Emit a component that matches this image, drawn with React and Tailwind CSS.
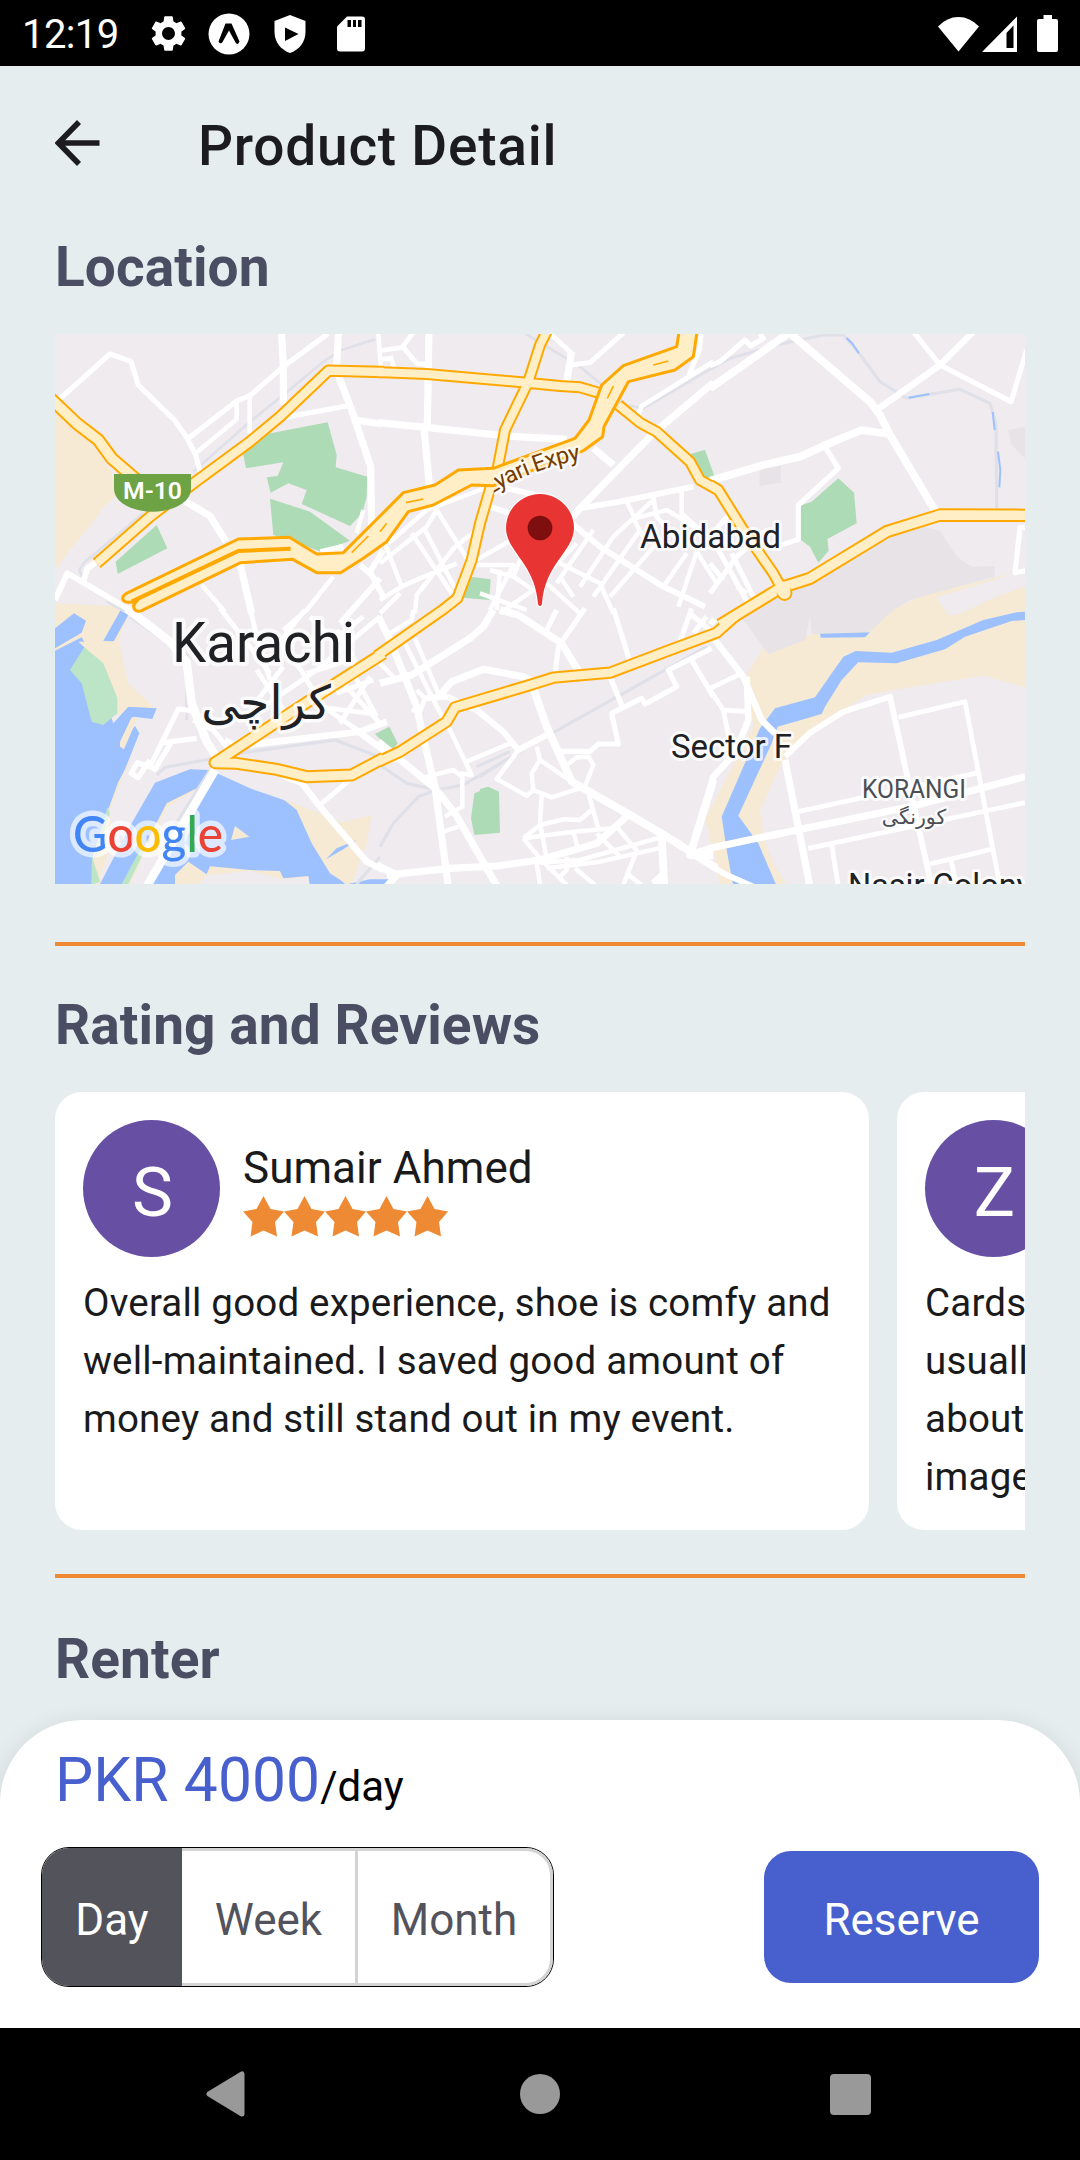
import React from "react";
import { MdSettings } from "react-icons/md";

/* Map geometry: six 330x280 tiles, drawn at 3 units per pixel. */
const TILES = {
  a: "translate(-5 -4) scale(.333333)",
  b: "translate(325 -4) scale(.333333)",
  c: "translate(655 -4) scale(.333333)",
  d: "translate(-5 276) scale(.333333)",
  e: "translate(325 276) scale(.333333)",
  f: "translate(655 276) scale(.333333)",
};

const SAND = "#f6ead5";
const WATER = "#9dc1ff";
const PARK = "#addbb6";
const LAND = "#efebef";
const GREY = "#e7e3e7";

const AREAS = [
  ["a", SAND, "M0 225 L15 240 L145 365 L185 430 L200 500 L160 530 L130 575 L60 660 L15 720 H0Z"],
  ["c", GREY, "M148 418 L212 408 V458 L148 468Z M895 300 L945 290 V385 L905 345Z"],
  ["f", SAND, "M285 80 L560 -5 L640 -45 L860 -98 L945 -118 V232 L820 197 L600 232 L470 255 L400 300 L300 375 L220 450 L205 480 L150 600 L160 680 L190 760 L240 840 L30 840 L15 740 L0 690 V600 L130 350 L112 190 L160 115Z"],
  ["e", SAND, "M1000 590 L975 625 L985 660 L1010 640Z"],
  ["c", GREY, "M90 850 L320 750 L530 620 L640 590 L690 602 L740 680 L785 710 L855 708 L853 740 L600 810 L550 840 L480 905 L305 912 L300 860 L285 930 L175 972 L100 870Z"],
  ["c", LAND, "M678 802 L860 748 L950 715 V768 L860 800 L740 855 L715 855Z"],
  ["f", WATER, "M945 5 L920 7 L820 30 L680 90 L545 128 L437 123 L400 140 L315 262 L195 295 L150 355 L35 620 L50 720 L72 840 H205 L145 700 L85 617 L185 400 L203 350 L335 312 L345 290 L395 210 L445 157 L560 160 L705 118 L765 80 L905 33 L945 30Z M330 71 L480 67 L465 82 L332 83Z"],
  ["a", PARK, "M578 365 L590 350 L650 312 L833 277 L860 375 L857 412 L952 440 L950 500 L937 550 L900 588 L755 522 L770 480 L715 460 L662 488 L650 442 L683 438 L700 397 L588 415Z M660 506 L780 545 L900 632 L812 665 L720 630 L670 615Z M320 585 L352 655 L203 732 L197 695Z"],
  ["b", PARK, "M930 372 L975 360 L1005 443 L960 448Z M270 740 L332 748 L328 810 L250 803Z"],
  ["c", PARK, "M385 445 L432 488 L440 580 L352 627 L356 662 L325 698 L300 650 L270 628 V527 L305 515Z"],
  ["e", PARK, "M-15 372 L28 350 L53 400 L40 418 L0 388Z M283 550 L300 543 L300 537 L325 530 L357 545 L360 668 L283 675 L273 625Z"],
  ["d", SAND, "M15 -20 L245 -10 L205 92 L235 220 L320 300 L235 330 L15 200Z"],
  ["d", WATER, "M15 55 L72 10 L108 32 L95 68 L15 115Z M160 92 L212 0 L235 15 L190 96Z M15 122 L95 82 L105 100 L190 340 L235 290 L320 295 L307 327 L250 320 L215 400 L255 347 L268 370 L240 440 L200 540 L170 610 L130 740 L128 840 H0 V122Z"],
  ["d", SAND, "M85 95 L195 94 L235 220 L283 287 L235 290 L202 310 L190 250 L103 112Z M245 322 L262 325 L222 418 L210 410 V395Z M246 440 L205 515 L160 640 L128 740 V822 H160 L250 640 L200 590Z"],
  ["d", "#bce4c7", "M103 112 L160 160 L202 265 V310 L160 345 L125 335 L95 220 L60 180Z M172 590 L180 610 L128 760 L160 640Z M126 740 L150 815 L132 822 H124Z"],
  ["d", LAND, "M246 440 L212 515 L180 600 L186 700 L150 800 L160 822 L260 640 L330 500 L420 470 L300 380Z"],
  ["d", WATER, "M150 822 L245 640 L315 518 L420 478 L480 480 L600 535 L730 580 L800 700 L845 785 L905 840 H140Z"],
  ["d", SAND, "M350 580 L440 535 L255 822 H225Z M375 795 L415 755 L470 793 L480 769 L600 780 L690 783 L700 805 L775 798 L780 830 H375Z M555 648 L598 680 L543 690Z M700 568 L880 637 L965 615 L960 700 L920 822 H890 L840 790 L785 700 L740 600Z"],
  ["d", "#bce4c7", "M285 720 L235 822 H215 L270 720Z"],
  ["d", LAND, "M478 480 L440 540 L352 590 L290 720 L240 822 H300 L400 660 L500 490Z M470 796 L600 782 L695 808 L775 802 L778 830 H440Z M965 615 L990 600 V810 L905 822 L950 700Z"],
  ["d", WATER, "M828 748 L860 715 L920 690 L880 718Z M895 822 L960 808 L1020 808 L1010 822Z"],
];

/* Railways and drains. */
const RAILS = [
  ["a", 8, "M975 28 L875 60 L820 95 L700 195 L600 275 L430 425 M280 550 L100 700 L88 720 L100 750 M170 815 L235 850"],
  ["b", 8, "M435 10 L600 110 L740 225 L790 235 L990 118"],
  ["c", 9, "M0 118 L60 85 L200 45 L340 15 L400 15 L440 60 L510 155 L590 205 L750 178 L840 220 L858 280 L860 535"],
  ["d", 9, "M410 130 V330 M320 495 L345 472 L600 425 L855 390 L1000 445 M480 480 L340 700 M240 20 L400 130 M920 822 L990 740"],
  ["e", 9, "M0 465 L80 520 L170 540 L250 525 L480 390 L980 110 M0 710 L40 640 L115 560 L170 540 M290 470 L390 425 M300 500 L410 430"],
];

const CANALS = [
  ["c", 6, "M410 24 L428 42 L446 70 M596 203 L658 192 M848 246 L854 300 M864 365 L871 420 L868 472"],
];

/* White streets. */
const STREETS = [
  ["a", 14, "M20 215 L180 72 L243 94 L265 165 L375 272 L412 325 L437 375 L450 425 M415 325 L560 213 L600 197 L700 110 L835 10 M690 265 L890 228"],
  ["a", 12, "M437 370 L560 268 V215 M599 200 V310 M455 765 L525 845 M850 740 L770 840 L700 900 M940 540 L920 610 M985 10 L992 110"],
  ["a", 20, "M694 0 L700 110 V225 M866 0 L860 105 L870 150 L905 240 L962 410 L965 600 M400 510 L480 558 L528 635 M570 700 L605 850 M915 270 L995 282 M812 668 L880 652"],
  ["a", 16, "M15 810 L52 730 L240 840 M100 755 L112 715 L150 688 M990 745 L870 880 M930 705 L965 735 L1000 800 M960 725 L1000 660"],
  ["b", 20, "M147 0 L142 280 L132 295 L148 465 M-5 278 L145 293 L380 318 L560 328"],
  ["b", 13, "M0 62 L70 52 L110 100 L150 105 M0 88 L40 84 M30 78 L45 118 M68 50 L105 0 M510 10 L575 70 L570 105 L630 98 L740 0 M965 0 L958 60 L925 140 M775 255 L785 228 L1000 95"],
  ["b", 20, "M575 65 L560 155 M1000 158 L820 310 L600 535 L560 580 M640 355 L700 405"],
  ["b", 16, "M600 535 L720 515 L940 470 M570 575 L660 650 L850 770 L975 830 M330 530 L390 550 M360 470 L470 495"],
  ["b", 12, "M25 640 L140 540 L300 480 L360 470 M0 700 L140 590 L170 540 L270 700 M130 590 L225 775 M95 610 L215 790 M15 640 L65 770 L0 810 M65 770 L120 745 L230 700 M105 850 L110 795 L225 650 L310 585 M0 850 L60 790 M280 695 L430 610 M290 705 H400 L330 840 M330 720 L400 740 L460 780 L360 850 M400 740 L440 640 M360 720 L350 840 M300 790 L440 840"],
  ["b", 12, "M590 640 L470 760 M540 700 L660 760 L700 850 M600 770 L700 620 L820 510 M640 800 L780 600 M530 760 L640 600 M690 800 L830 640 M540 740 L580 800 M820 500 L830 560 L900 640 M905 480 V550 L960 600 M740 515 L765 565 L860 540 L960 600 M760 565 L800 640 M950 665 L1010 760 M950 665 L895 830 M850 770 L920 670 M500 760 L600 850"],
  ["c", 22, "M240 10 L480 215 L510 255 L540 315 L680 550 M0 175 L235 10 M0 452 L160 405 L270 380 L370 335 L455 300 L535 312"],
  ["c", 18, "M500 240 L690 105 L790 5"],
  ["c", 14, "M610 5 L690 105 L903 215 L950 60 M0 108 L30 95 L105 30 L122 48 L160 25 L150 10 M345 350 L385 415 L265 525 V628 L200 650 M950 592 H930 L915 728 L950 722"],
  ["c", 14, "M0 700 L40 750 M20 650 L120 830 M65 670 L130 800 M0 790 L80 680 L170 600 M80 770 L110 790 M0 620 L60 550"],
  ["d", 24, "M230 -5 L360 95 L410 155 L425 280 L470 395 L505 450 M495 480 L290 830"],
  ["d", 14, "M425 302 L385 297 L300 470 L262 458 L243 490 L265 503 L300 450 M340 398 L440 385 M362 400 L315 478 L290 465 M525 390 L550 400 M430 330 L490 360 L545 430"],
  ["d", 18, "M590 405 L930 365 L1010 335 M700 498 L755 518 L810 590 L950 755 L1000 780 M925 365 L1040 450"],
  ["d", 13, "M815 580 L905 505 M510 -5 L600 110 L660 190 M600 -5 L630 120 L660 210 M765 0 L690 95 L760 190 M990 20 L800 180 L640 290 M620 180 L700 300 M700 170 L600 300 M750 175 L800 260 M780 20 L850 90 L940 20 M880 220 L990 340 M800 290 L960 310 M770 190 L900 150 M860 60 L920 160 M860 250 L970 210 M870 340 L960 200 M910 190 L980 320 M820 290 L930 365"],
  ["e", 20, "M-5 20 L30 90 L110 290 L128 375 L165 530 L205 830 M-5 395 L165 535 L225 610 L352 830 M20 795 L210 775 L350 768 L480 750 L650 700 L740 620"],
  ["e", 20, "M0 220 L95 195 L270 85 L310 50 L340 0 M180 255 L215 215 L310 178 L430 200 L470 220 M360 0 L415 15 L545 100 L600 190 M-10 765 L50 795 L20 830"],
  ["e", 12, "M75 100 L150 250 L200 345 M105 85 L175 250 M0 160 L40 200 M100 0 L95 30 L30 70 M205 350 L275 495 L240 490 M260 455 L390 400 M120 505 L220 480 L247 500 V590 L195 620 M190 665 L235 650 M95 300 L120 305 L135 265 L110 240"],
  ["e", 17, "M130 265 L200 260 L290 300 L370 365 L415 420 L500 375"],
  ["e", 14, "M530 0 L495 70 M615 -5 L535 110 L525 195 M700 -5 L750 155 M690 200 L727 290 M995 115 L865 180 L890 230 L795 282 L785 265 L695 310 L715 402 H655 L630 424 H540 M932 145 L1000 260 M935 -5 L900 95 M930 10 L1000 70 M940 70 L980 20"],
  ["e", 22, "M460 235 L500 350 L575 515 L750 615 L860 680 L1010 775"],
  ["e", 12, "M480 450 L575 515 M415 420 L350 507 L440 557 L460 540 L455 490 L480 450 L470 410 M460 540 L515 562 L615 530 L640 465 L625 440 L590 442 L555 470 M485 555 L480 640 L500 745 M625 550 L655 655 M430 685 L480 645 L550 628 L600 630 L635 600 M430 685 L580 665 L700 655 M430 685 L480 745 L560 825 M580 665 L592 710 M480 758 L600 750 L850 680 M500 775 L660 755 L850 712 M650 670 L720 740 M710 650 L770 722 L730 825 M560 740 V780 L535 805 M585 775 L645 825 M470 760 L480 825 M740 790 L785 825"],
  ["e", 22, "M845 680 L853 830 M1000 510 L930 735 H1000 M820 822 L855 790"],
  ["f", 18, "M15 90 L100 200 L155 330 L195 370 M110 200 L115 330 L75 430 L10 500 L-10 570 M0 30 L15 40"],
  ["f", 13, "M0 235 L95 190 M0 240 L40 300 L60 400 M40 300 L115 305 M565 322 L765 275 L870 830 M265 605 L540 545 L810 487 M295 715 L945 578 M365 705 L385 830 M660 762 L855 715 M722 745 L740 830"],
  ["f", 20, "M225 450 L300 830 M-60 735 L0 715 L140 685 L600 590 L830 530 L945 500"],
  ["f", 16, "M225 440 L300 368 L400 305 L540 260 L605 560 L665 830 M-40 740 L40 790 L130 830"],
];

/* Yellow main roads. */
const MAIN = [
  ["a", 36, "M0 205 L15 218 L80 280 L145 330 L185 385 L260 450"],
  ["a", 32, "M140 700 L300 560 L430 460 L600 335 L690 260 L835 122 L1000 126"],
  ["b", 31, "M-10 126 L140 132 L440 158 L540 168 L600 172 L655 188 M500 5 L480 45 L445 155 L375 300 L350 430 M335 460 L300 580 L275 690 L232 805 L190 838 L-10 978 M715 225 L780 278 L830 305 L930 395 L960 450 L1010 478"],
  ["c", 31, "M0 465 L25 480 L100 600 L190 730 L215 775"],
  ["c", 35, "M30 885 L215 772 L300 745 L530 605 L690 555 L960 556"],
  ["d", 34, "M1000 130 L840 232 L720 310 L495 458 L560 460 L680 478 L770 500 L905 495 L1000 445"],
  ["e", 32, "M-5 455 L60 425 L200 335 L225 292 L440 228 L520 203 L690 188 L870 120 L1010 68 L1070 15"],
];

const HIGHWAY =
  "M240 785 L565 627 L718 622 L800 672 L880 668 L990 558 L1060 488 L1155 465 L1225 420 L1330 415 L1575 325 L1617 270 L1655 165 L1720 107 L1880 50 L1888 0 L1942 0 L1930 80 L1875 120 L1735 155 L1662 290 L1658 320 L1600 362 L1330 467 L1265 465 L1150 525 L1075 545 L1010 635 L940 685 L872 728 L800 728 L728 688 L572 698 L275 842 C255 850 240 828 262 812 L250 815 C215 822 205 800 240 785Z";

function Strokes({ items, color, extra = 0 }) {
  return items.map(([tile, width, d], i) => (
    <path key={i} transform={TILES[tile]} d={d} stroke={color} strokeWidth={width + extra} fill="none" strokeLinejoin="round" />
  ));
}

function Label({ children, color = "#202124", halo = 6, ...props }) {
  return (
    <text fill={color} stroke="#fff" strokeOpacity=".75" strokeWidth={halo} strokeLinejoin="round" paintOrder="stroke" fontFamily="Roboto, 'DejaVu Sans', sans-serif" {...props}>
      {children}
    </text>
  );
}

function LocationMap() {
  return (
    <svg className="mt-[37px] block h-[550px] w-[970px] shrink-0" viewBox="0 0 970 550">
      <rect width="970" height="550" fill={LAND} />
      {AREAS.map(([tile, fill, d], i) => (
        <path key={i} transform={TILES[tile]} d={d} fill={fill} />
      ))}
      <Strokes items={RAILS} color="#dfe0e8" />
      <Strokes items={CANALS} color={WATER} />
      <Strokes items={STREETS} color="#fff" extra={1.5} />
      <Strokes items={MAIN} color="#ffa900" extra={5} />
      <Strokes items={MAIN} color="#ffeec6" extra={-7} />
      <circle cx="729.5" cy="259" r="7" fill="#ffeec6" stroke="#ffa900" strokeWidth="1.800" />
      <circle cx="728" cy="255" r="7.500" fill="#ffeec6" />
      <g transform={TILES.a}>
        <path d={HIGHWAY} fill="#ffeec6" stroke="#ffa900" strokeWidth="9" strokeLinejoin="round" />
        <path d="M245 815 L565 663 L722 656" fill="none" stroke="#ffa900" strokeWidth="12" />
        <path d="M905 668 L955 618 M1068 518 L1120 507 M1672 205 L1690 168 M1810 105 L1855 93 M990 605 L1010 580" fill="none" stroke="#ffa900" strokeWidth="5" />
        <path d="M192 432 H423 V475 C423 520 365 545 308 545 C250 545 192 520 192 475Z" fill="#6da245" />
      </g>
      <text x="97.500" y="164.500" textAnchor="middle" fontSize="23.500" fontWeight="600" textLength="59" lengthAdjust="spacingAndGlyphs" fill="#fff" fontFamily="Roboto, sans-serif">M-10</text>

      <clipPath id="expressway-label">
        <rect x="439" y="90" width="100" height="80" />
      </clipPath>
      <path id="expressway" d="M435 161 Q478 134 530 125" fill="none" />
      <g clipPath="url(#expressway-label)">
        <Label color="#733c00" fontSize="23.500" halo={5}>
          <textPath href="#expressway" textLength="98" lengthAdjust="spacing">Lyari Expy</textPath>
        </Label>
      </g>

      <Label x="117" y="327.500" fontSize="56" textLength="183" lengthAdjust="spacingAndGlyphs" halo={8}>Karachi</Label>
      <Label x="211" y="385" fontSize="47" textAnchor="middle" halo={7}>كراچی</Label>
      <Label x="585" y="213.500" fontSize="33" textLength="141" lengthAdjust="spacingAndGlyphs">Abidabad</Label>
      <Label x="616" y="423.500" fontSize="33" textLength="121" lengthAdjust="spacingAndGlyphs">Sector F</Label>
      <Label x="807" y="464" fontSize="26" textLength="104" lengthAdjust="spacingAndGlyphs" color="#4b4f55">KORANGI</Label>
      <Label x="859" y="490" fontSize="20.500" textAnchor="middle" color="#4b4f55" halo={5}>کورنگی</Label>
      <Label x="793" y="562.500" fontSize="33" textLength="184" lengthAdjust="spacingAndGlyphs">Nasir Colony</Label>

      <text x="18" y="517.500" fontSize="50" fontWeight="500" textLength="150" lengthAdjust="spacingAndGlyphs" fontFamily="Lato, sans-serif" stroke="#fff" strokeOpacity=".65" strokeWidth="11" strokeLinejoin="round" paintOrder="stroke">
        <tspan fill="#4285f4">G</tspan><tspan fill="#ea4335">o</tspan><tspan fill="#fbbc04">o</tspan><tspan fill="#4285f4">g</tspan><tspan fill="#34a853">l</tspan><tspan fill="#ea4335">e</tspan>
      </text>

      <g transform={TILES.b}>
        <path d="M480 492 C424 492 378 538 378 594 C378 664 466 700 474 822 Q475 828 480 828 Q485 828 486 822 C494 700 582 664 582 594 C582 538 536 492 480 492Z" fill="#e93434" stroke="#fff" strokeWidth="7" paintOrder="stroke" />
        <circle cx="480" cy="594" r="37" fill="#7f0f0f" />
      </g>
    </svg>
  );
}

function StatusBar() {
  return (
    <div className="flex h-[66px] shrink-0 items-center bg-black pt-px pr-[22px] pl-[22px] text-white">
      <span className="w-[100px] pt-[2px] text-[40px] leading-[66px] tracking-[-0.6px]">12:19</span>
      <MdSettings className="ml-[25px] size-[43px]" />
      <svg className="ml-[18px] size-[42px]" viewBox="0 0 42 42">
        <circle cx="21" cy="21" r="20.500" fill="#fff" />
        <path d="M17.500 10.500 H23.500 L31.500 28.500 C30.500 31.500 28.500 31.500 27.500 29.500 L21 17.500 L14.500 29 C13.500 31 11.500 30.500 10.500 28.500Z" fill="#000" />
      </svg>
      <svg className="ml-[24px] h-[40px] w-[32px]" viewBox="0 0 32 40">
        <path d="M16 1 L31.500 7 V18 C31.500 28 25 36 16 39 C7 36 .5 28 .5 18 V7Z" fill="#fff" />
        <path d="M11 13.500 V27 L24.500 20Z" fill="#000" />
      </svg>
      <svg className="ml-[31px] h-[36px] w-[28px]" viewBox="0 0 28 36">
        <path d="M10 .5 H25 Q28 .5 28 3.500 V32.500 Q28 35.500 25 35.500 H3 Q0 35.500 0 32.500 V10.500Z" fill="#fff" />
        <path d="M10.500 4 H14 V11 H10.500Z M16 4 H19 V11 H16Z M21 4 H24.500 V11 H21Z" fill="#000" />
      </svg>
      <svg className="ml-auto h-[36px] w-[41px]" viewBox="0 0 41 36">
        <path d="M20.500 35.500 L0 10.500 Q9 1 20.500 1 T41 10.500Z" fill="#fff" />
      </svg>
      <svg className="ml-[3px] h-[36px] w-[35px]" viewBox="0 0 35 36">
        <path fillRule="evenodd" d="M35 .5 V36 H0Z M24.500 17 V32 H31.500 V9.500Z" fill="#fff" />
      </svg>
      <svg className="ml-[20px] h-[37px] w-[21px]" viewBox="0 0 21 37">
        <path d="M6.500 0 H15 V4 H19 Q21 4 21 6 V35 Q21 37 19 37 H2 Q0 37 0 35 V6 Q0 4 2 4 H6.500Z" fill="#fff" />
      </svg>
    </div>
  );
}

function Star() {
  return (
    <svg className="h-[41px] w-[41px]" viewBox="0 0 41 41">
      <path d="M20.500 0 L27.500 13 L41 15.500 L32 26 L34 40.500 L20.500 34.500 L7.500 40.500 L9.500 26 L0 15.500 L13.500 13Z" fill="#ed8a33" />
    </svg>
  );
}

function ReviewCard({ initial, name, lines }) {
  return (
    <article className="h-[438px] w-[814px] shrink-0 rounded-[27px] bg-white p-[28px] text-[#1a1a1a]">
      <div className="flex h-[137px]">
        <div className="flex size-[137px] shrink-0 items-center justify-center rounded-full bg-[#6750a4] pt-[8px] pl-[2px] text-[69px] leading-none text-white">
          {initial}
        </div>
        <div className="ml-[23px] pt-[20px]">
          <div className="text-[44px] leading-[56px] tracking-[0.05px] whitespace-nowrap">{name}</div>
          <div className="flex">
            {[0, 1, 2, 3, 4].map((i) => (
              <Star key={i} />
            ))}
          </div>
        </div>
      </div>
      <p className="mt-[17px] text-[38.5px] leading-[58px] tracking-[0.19px] whitespace-nowrap">
        {lines.map((line) => (
          <span key={line} className="block">{line}</span>
        ))}
      </p>
    </article>
  );
}

const HEADING = "shrink-0 text-[55px] leading-[60px] font-bold tracking-[0.08px] text-[#4b4e63]";

export default function App() {
  return (
    <div className="flex h-[2160px] w-[1080px] flex-col overflow-hidden bg-[#e5edee] font-[Roboto,sans-serif]">
      <StatusBar />
      <header className="flex h-[160px] shrink-0 items-center pl-[55px]">
        <svg className="mb-[6px] h-[46px] w-[45px]" viewBox="0 0 45 46">
          <path d="M24 2 L3.500 23 L24 44 M3.500 23 H44.500" fill="none" stroke="#1c1b1f" strokeWidth="5.600" />
        </svg>
        <h1 className="ml-[98px] text-[55px] leading-[60px] font-medium tracking-[0.75px] text-[#1c1b1f]">Product Detail</h1>
      </header>

      <main className="flex h-[1494px] shrink-0 flex-col overflow-hidden px-[55px] pt-[11px]">
        <h2 className={HEADING}>Location</h2>
        <LocationMap />
        <div className="mt-[58px] h-[4px] shrink-0 bg-[#ed8a33]" />
        <h2 className={`mt-[49px] ${HEADING}`}>Rating and Reviews</h2>
        <div className="mt-[37px] flex shrink-0 gap-[28px] overflow-hidden">
          <ReviewCard
            initial="S"
            name="Sumair Ahmed"
            lines={["Overall good experience, shoe is comfy and", "well-maintained. I saved good amount of", "money and still stand out in my event."]}
          />
          <ReviewCard initial="Z" name="" lines={["Cards", "usually", "about", "image"]} />
        </div>
        <div className="mt-[44px] h-[4px] shrink-0 bg-[#ed8a33]" />
        <h2 className={`mt-[51px] ${HEADING}`}>Renter</h2>
      </main>

      <section className="flex h-[308px] shrink-0 flex-col rounded-t-[83px] bg-white shadow-[0_4px_24px_rgba(0,0,0,0.10)]">
        <div className="mt-[25px] flex h-[72px] items-baseline pl-[55px] leading-[72px]">
          <span className="text-[60.5px] tracking-[0.1px] text-[#4760cd]">PKR 4000</span>
          <span className="text-[42px] text-black">/day</span>
        </div>
        <div className="mt-[30px] flex items-center justify-between pr-[41px] pl-[41px]">
          <div className="flex h-[140px] w-[513px] overflow-hidden rounded-[28px] border border-black text-[44px] text-[#53535c]">
            <button className="w-[140px] bg-[#53535c] pt-[6px] text-white">Day</button>
            <button className="w-[176px] border-y-[3px] border-r-[3px] border-[#d3d3d3] pt-[6px]">Week</button>
            <button className="flex-1 rounded-r-[27px] border-y-[3px] border-r-[3px] border-[#d3d3d3] pt-[6px]">Month</button>
          </div>
          <button className="h-[132px] w-[275px] rounded-[27px] bg-[#4760cd] pt-[6px] text-[44px] text-[#fdfdfd]">Reserve</button>
        </div>
      </section>

      <nav className="flex h-[132px] shrink-0 items-center bg-black pl-[206px]">
        <svg className="h-[46px] w-[39px]" viewBox="0 0 39 46">
          <path d="M36 3 V43 L3 23Z" fill="#999" stroke="#999" strokeWidth="5" strokeLinejoin="round" />
        </svg>
        <div className="ml-[275px] size-[40px] rounded-full bg-[#999]" />
        <div className="ml-[270px] size-[41px] rounded-[4px] bg-[#999]" />
      </nav>
    </div>
  );
}
